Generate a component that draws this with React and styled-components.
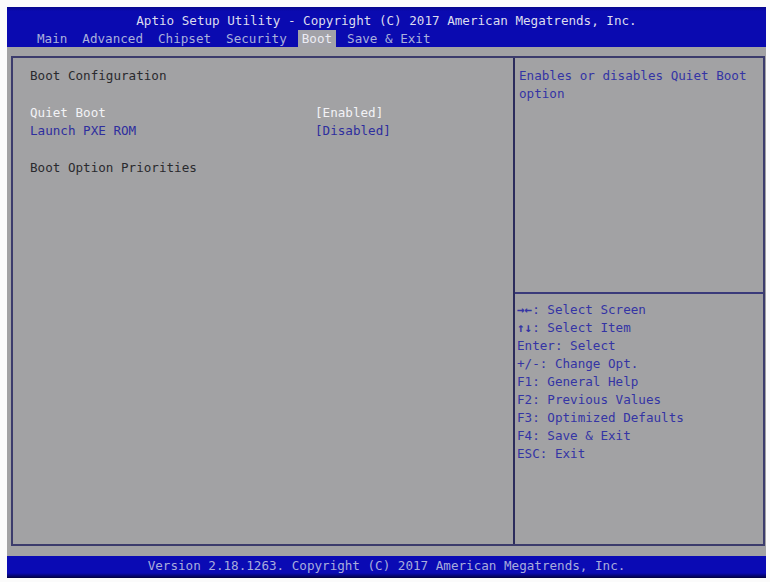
import React from "react";
import styled, { createGlobalStyle } from "styled-components";

const Global = createGlobalStyle`
  html, body { margin: 0; padding: 0; background: #fbfbfb; }
  body { font-family: "DejaVu Sans Mono", "Liberation Mono", monospace; }
  * { box-sizing: border-box; }
`;

const Screen = styled.div`
  width: 770px;
  height: 582px;
  padding: 7px 4px 4px 7px;
  display: flex;
  flex-direction: column;
  font-family: "DejaVu Sans Mono", "Liberation Mono", monospace;
  font-size: 12.6px;
`;

const Header = styled.header`
  height: 40px;
  background: linear-gradient(#06068a 0px, #0a0ab0 4px, #0a0ab0 100%);
  display: flex;
  flex-direction: column;
  padding-top: 5px;
`;

const Title = styled.div`
  height: 18px;
  line-height: 18px;
  text-align: center;
  color: #dcdcee;
  white-space: pre;
`;

const Tabs = styled.nav`
  margin-top: auto;
  height: 17px;
  display: flex;
  gap: 7px;
  padding-left: 26px;
`;

const Tab = styled.span`
  line-height: 17px;
  padding: 0 4px;
  white-space: pre;
  color: ${(p) => (p.$active ? "#ececf4" : "#a9b0dc")};
  background: ${(p) => (p.$active ? "#a2a2a8" : "transparent")};
`;

const Body = styled.main`
  flex: 1;
  background: #a2a2a4;
  padding: 9px 1px 10px 4px;
  display: flex;
`;

const Panel = styled.div`
  flex: 1;
  border: 2px solid #3c3c6c;
  display: grid;
  grid-template-columns: 502px 1fr;
`;

const Left = styled.section`
  padding: 9px 0 0 17px;
  border-right: 2px solid #2c2c5c;
`;

const Row = styled.div`
  display: grid;
  grid-template-columns: 285px auto;
  height: 18.4px;
  line-height: 18.4px;
  white-space: pre;
  color: ${(p) =>
    p.$tone === "white" ? "#f2f2f6" : p.$tone === "blue" ? "#2e2e9e" : "#2a2a2e"};
`;

const Right = styled.aside`
  display: flex;
  flex-direction: column;
`;

const HelpTop = styled.div`
  height: 236px;
  padding: 9px 0 0 4px;
  border-bottom: 2px solid #3a3a7a;
`;

const HelpKeys = styled.div`
  padding: 7px 0 0 2px;
`;

const HelpLine = styled.div`
  height: 18px;
  line-height: 18px;
  color: #3434a4;
  white-space: pre;
`;

const Arrow = styled.b`
  font-weight: bold;
`;

const Footer = styled.footer`
  height: 22px;
  background: linear-gradient(#0a0ab4 0px, #0a0ab4 17px, #000040 22px);
  color: #a8acdc;
  text-align: center;
  line-height: 20px;
  white-space: pre;
`;

const tabs = ["Main", "Advanced", "Chipset", "Security", "Boot", "Save & Exit"];

const keys = [
  ["\u2192\u2190", ": Select Screen"],
  ["\u2191\u2193", ": Select Item"],
  ["", "Enter: Select"],
  ["", "+/-: Change Opt."],
  ["", "F1: General Help"],
  ["", "F2: Previous Values"],
  ["", "F3: Optimized Defaults"],
  ["", "F4: Save & Exit"],
  ["", "ESC: Exit"],
];

export default function App() {
  return (
    <Screen>
      <Global />
      <Header>
        <Title>Aptio Setup Utility - Copyright (C) 2017 American Megatrends, Inc.</Title>
        <Tabs>
          {tabs.map((t) => (
            <Tab key={t} $active={t === "Boot"}>
              {t}
            </Tab>
          ))}
        </Tabs>
      </Header>
      <Body>
        <Panel>
          <Left>
            <Row>Boot Configuration</Row>
            <Row />
            <Row $tone="white">
              <span>Quiet Boot</span>
              <span>[Enabled]</span>
            </Row>
            <Row $tone="blue">
              <span>Launch PXE ROM</span>
              <span>[Disabled]</span>
            </Row>
            <Row />
            <Row>Boot Option Priorities</Row>
          </Left>
          <Right>
            <HelpTop>
              <HelpLine>Enables or disables Quiet Boot</HelpLine>
              <HelpLine>option</HelpLine>
            </HelpTop>
            <HelpKeys>
              {keys.map(([a, k]) => (
                <HelpLine key={k}>
                  {a && <Arrow>{a}</Arrow>}
                  {k}
                </HelpLine>
              ))}
            </HelpKeys>
          </Right>
        </Panel>
      </Body>
      <Footer>Version 2.18.1263. Copyright (C) 2017 American Megatrends, Inc.</Footer>
    </Screen>
  );
}
